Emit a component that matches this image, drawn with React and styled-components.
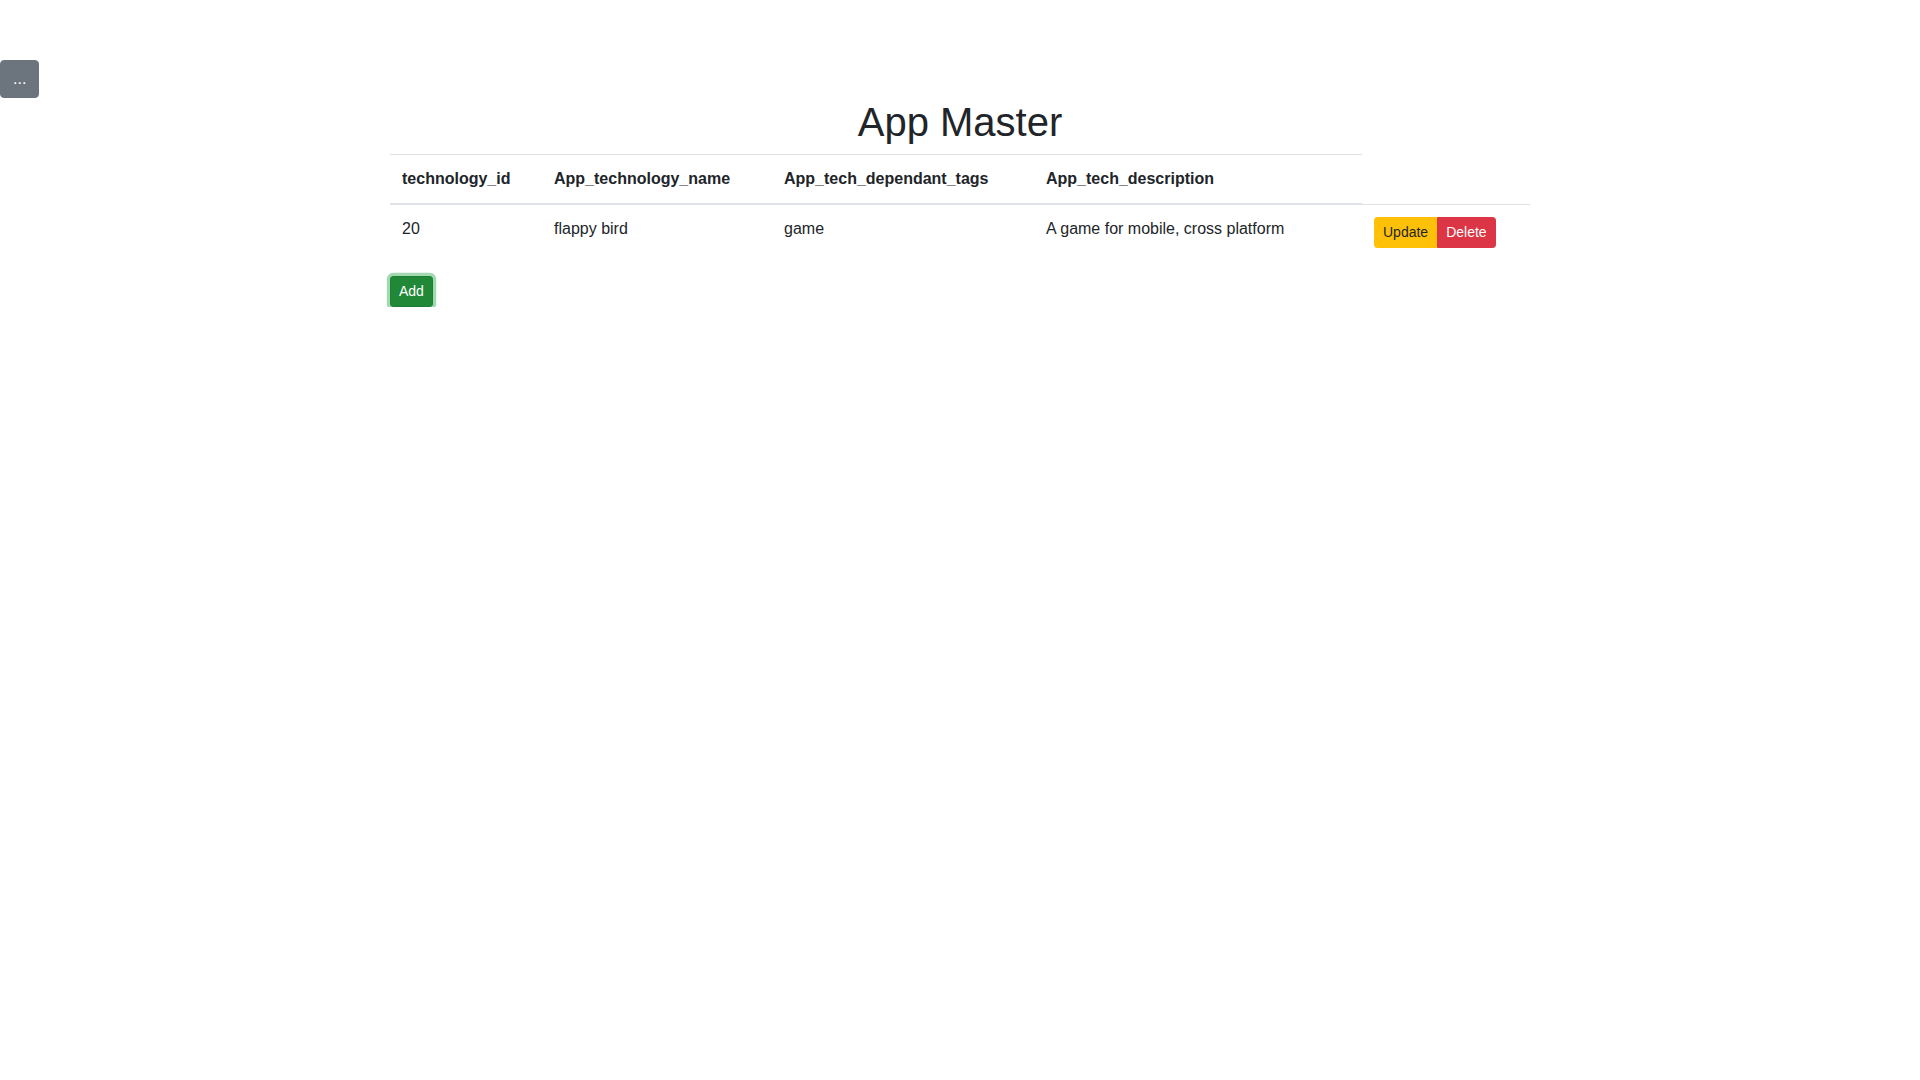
import React, { useState } from "react";
import styled, { createGlobalStyle } from "styled-components";

const GlobalStyle = createGlobalStyle`
  body {
    margin: 0;
    font-family: "Liberation Sans", Arial, sans-serif;
    font-size: 16px;
    line-height: 1.5;
    color: #212529;
    background: #fff;
  }
`;

const apps = [
  {
    technology_id: 20,
    App_technology_name: "flappy bird",
    App_tech_dependant_tags: "game",
    App_tech_description: "A game for mobile, cross platform",
  },
];

const columns = [
  { key: "technology_id", width: 152 },
  { key: "App_technology_name", width: 230 },
  { key: "App_tech_dependant_tags", width: 262 },
  { key: "App_tech_description", width: 328 },
];

const App = () => {
  const [rows] = useState(apps);

  return (
    <Page>
      <GlobalStyle />
      <MenuButton>...</MenuButton>
      <Container>
        <Title>App Master</Title>
        <Table>
          <colgroup>
            {columns.map((c) => (
              <col key={c.key} style={{ width: c.width }} />
            ))}
            <col style={{ width: 168 }} />
          </colgroup>
          <thead>
            <tr>
              {columns.map((c) => (
                <Th key={c.key}>{c.key}</Th>
              ))}
            </tr>
          </thead>
          <tbody>
            {rows.map((row) => (
              <tr key={row.technology_id}>
                {columns.map((c) => (
                  <Td key={c.key}>{row[c.key]}</Td>
                ))}
                <Td>
                  <BtnGroup>
                    <SmallButton variant="warning">Update</SmallButton>
                    <SmallButton variant="danger">Delete</SmallButton>
                  </BtnGroup>
                </Td>
              </tr>
            ))}
          </tbody>
        </Table>
        <AddButton>Add</AddButton>
      </Container>
    </Page>
  );
};

// Styling Info
const Page = styled.div`
  padding-top: 60px;
`;

const MenuButton = styled.button`
  display: block;
  width: 39px;
  height: 38px;
  padding: 6px 12px;
  border: 1px solid #6c757d;
  border-radius: 4px;
  background: #6c757d;
  color: #fff;
  font-family: inherit;
  font-size: 16px;
  line-height: 24px;
  cursor: pointer;
`;

const Container = styled.div`
  width: 1140px;
  margin: 0 auto;
`;

const Title = styled.h1`
  margin: 0 0 8px;
  font-size: 40px;
  font-weight: 500;
  line-height: 1.2;
  text-align: center;
`;

const Table = styled.table`
  width: 100%;
  margin-bottom: 16px;
  border-collapse: collapse;
  table-layout: fixed;
  color: #212529;
`;

const Th = styled.th`
  padding: 12px;
  text-align: left;
  vertical-align: bottom;
  font-weight: 700;
  border-top: 1px solid #dee2e6;
  border-bottom: 2px solid #dee2e6;
  white-space: nowrap;
`;

const Td = styled.td`
  padding: 12px;
  vertical-align: top;
  border-top: 1px solid #dee2e6;
`;

const BtnGroup = styled.div`
  display: inline-flex;
  & > button:first-child {
    border-top-right-radius: 0;
    border-bottom-right-radius: 0;
  }
  & > button:last-child {
    border-top-left-radius: 0;
    border-bottom-left-radius: 0;
  }
`;

const variants = {
  warning: { bg: "#ffc107", fg: "#212529" },
  danger: { bg: "#dc3545", fg: "#fff" },
  success: { bg: "#218838", fg: "#fff" },
};

const SmallButton = styled.button`
  padding: 4px 8px;
  font-family: inherit;
  font-size: 14px;
  line-height: 21px;
  border-radius: 3.2px;
  border: 1px solid ${(p) => variants[p.variant].bg};
  background: ${(p) => variants[p.variant].bg};
  color: ${(p) => variants[p.variant].fg};
  cursor: pointer;
`;

const AddButton = styled(SmallButton).attrs({ variant: "success" })`
  border-color: #1e7e34;
  box-shadow: 0 0 0 3.2px rgba(72, 180, 97, 0.5);
`;

export default App;
